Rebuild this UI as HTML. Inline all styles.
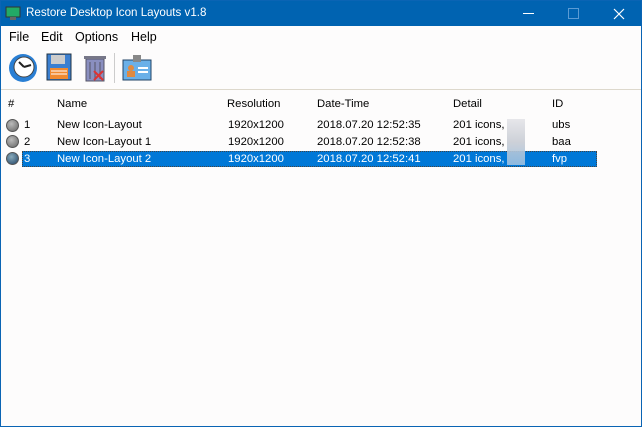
<!DOCTYPE html>
<html><head><style>
*{margin:0;padding:0;box-sizing:border-box}
body{width:642px;height:427px;overflow:hidden;background:#fff;font-family:"Liberation Sans",sans-serif;font-size:11.3px;color:#000;position:relative}
.win{position:absolute;left:0;top:0;width:642px;height:427px;border:1px solid #0a64b4;background:#fdfcfc}
.title{position:absolute;left:0;top:0;width:640px;height:25px;background:#0063b1;color:#fff;font-size:11.6px}
.title span{position:absolute;left:25px;top:5px}
.menu{position:absolute;top:29px;font-size:12.5px}
.tb{position:absolute;top:88px;left:0;width:640px;height:1px;background:#ddd8cc}
.t{position:absolute;white-space:nowrap}
.sel{position:absolute;left:21px;top:150px;width:575px;height:16px;background:#0078d7;border:1px dotted #444}
.dot{position:absolute;left:5px;width:13px;height:13px;border-radius:50%;background:radial-gradient(circle at 40% 35%,#bbb,#666);border:1px solid #555}
</style></head><body>
<div class="win">
<div class="title">
<svg style="position:absolute;left:4px;top:5px" width="16" height="15"><rect x="1" y="1" width="14" height="10" fill="#2a6" stroke="#333"/><rect x="5" y="11" width="6" height="3" fill="#666"/></svg>
<span>Restore Desktop Icon Layouts v1.8</span>
<div style="position:absolute;left:522px;top:12px;width:11px;height:1px;background:#fff"></div>
<div style="position:absolute;left:567px;top:7px;width:11px;height:11px;border:1px solid #5a9bd4"></div>
<svg style="position:absolute;left:612px;top:7px" width="12" height="12"><path d="M1 1L11 11M11 1L1 11" stroke="#fff" stroke-width="1.2"/></svg>
</div>
<div class="menu" style="left:8px">File</div>
<div class="menu" style="left:40px">Edit</div>
<div class="menu" style="left:74px">Options</div>
<div class="menu" style="left:130px">Help</div>
<svg style="position:absolute;left:6px;top:51px" width="32" height="32"><circle cx="16" cy="16" r="14" fill="#2a7fd4"/><circle cx="17" cy="15" r="10" fill="#fff" stroke="#444"/><path d="M17 15L12 10M17 15L24 13" stroke="#222" stroke-width="2"/></svg>
<svg style="position:absolute;left:45px;top:52px" width="26" height="28"><rect x="1" y="1" width="24" height="26" fill="#3b7fd0" stroke="#234"/><rect x="5" y="2" width="14" height="9" fill="#ccc"/><rect x="4" y="15" width="18" height="11" fill="#f08a30"/><path d="M5 18H21M5 21H21" stroke="#fff"/></svg>
<svg style="position:absolute;left:82px;top:51px" width="24" height="30"><rect x="3" y="7" width="18" height="22" fill="#8a8fc0" stroke="#556"/><rect x="1" y="4" width="22" height="3" fill="#778"/><path d="M7 10V27M12 10V27M17 10V27" stroke="#556"/><path d="M11 19L20 28M20 19L11 28" stroke="#d33" stroke-width="2"/></svg>
<div style="position:absolute;left:113px;top:52px;width:1px;height:30px;background:#ccc"></div>
<svg style="position:absolute;left:121px;top:53px" width="30" height="27"><rect x="1" y="6" width="28" height="20" fill="#6ab0e8" stroke="#246"/><rect x="11" y="1" width="8" height="7" fill="#888"/><circle cx="9" cy="14" r="3" fill="#e08a40"/><rect x="5" y="17" width="8" height="6" fill="#e08a40"/><path d="M16 14H26M16 18H26" stroke="#fff" stroke-width="2"/></svg>
<div class="tb"></div>
<div class="t" style="left:7px;top:97px">#</div>
<div class="t" style="left:56px;top:97px">Name</div>
<div class="t" style="left:226px;top:97px">Resolution</div>
<div class="t" style="left:316px;top:97px">Date-Time</div>
<div class="t" style="left:452px;top:97px">Detail</div>
<div class="t" style="left:551px;top:97px">ID</div>
<div class="sel"></div>
<div class="dot" style="top:118px"></div>
<div class="dot" style="top:134px"></div>
<div class="dot" style="top:151px;background:radial-gradient(circle at 40% 35%,#8ab,#246)"></div>
<div class="t" style="left:23px;top:118px">1</div><div class="t" style="left:56px;top:118px">New Icon-Layout</div><div class="t" style="left:227px;top:118px">1920x1200</div><div class="t" style="left:316px;top:118px">2018.07.20 12:52:35</div><div class="t" style="left:452px;top:118px">201 icons,</div><div class="t" style="left:551px;top:118px">ubs</div>
<div class="t" style="left:23px;top:135px">2</div><div class="t" style="left:56px;top:135px">New Icon-Layout 1</div><div class="t" style="left:227px;top:135px">1920x1200</div><div class="t" style="left:316px;top:135px">2018.07.20 12:52:38</div><div class="t" style="left:452px;top:135px">201 icons,</div><div class="t" style="left:551px;top:135px">baa</div>
<div style="color:#fff"><div class="t" style="left:23px;top:152px">3</div><div class="t" style="left:56px;top:152px">New Icon-Layout 2</div><div class="t" style="left:227px;top:152px">1920x1200</div><div class="t" style="left:316px;top:152px">2018.07.20 12:52:41</div><div class="t" style="left:452px;top:152px">201 icons,</div><div class="t" style="left:551px;top:152px">fvp</div></div>
<div style="position:absolute;left:506px;top:118px;width:18px;height:46px;background:linear-gradient(#e4e4e8,#c8ccd4,#9cc0e0);opacity:.9"></div>
</div>
</body></html>
